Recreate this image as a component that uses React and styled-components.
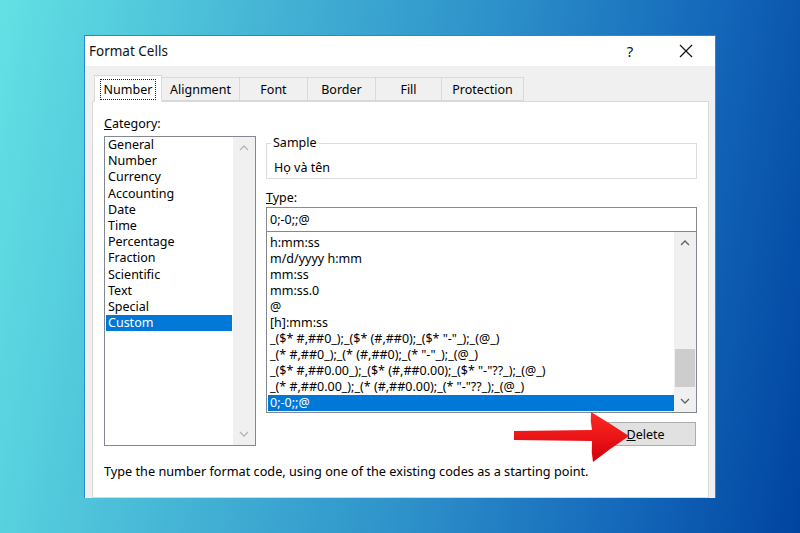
import React from "react";
import styled, { createGlobalStyle } from "styled-components";

const GlobalStyle = createGlobalStyle`
  html, body {
    margin: 0;
    padding: 0;
  }
  body {
    font-family: "Noto Sans", "Open Sans", sans-serif;
    color: #000;
  }
`;

const categories = [
  "General",
  "Number",
  "Currency",
  "Accounting",
  "Date",
  "Time",
  "Percentage",
  "Fraction",
  "Scientific",
  "Text",
  "Special",
  "Custom",
];

const formats = [
  "h:mm:ss",
  "m/d/yyyy h:mm",
  "mm:ss",
  "mm:ss.0",
  "@",
  "[h]:mm:ss",
  '_($* #,##0_);_($* (#,##0);_($* "-"_);_(@_)',
  '_(* #,##0_);_(* (#,##0);_(* "-"_);_(@_)',
  '_($* #,##0.00_);_($* (#,##0.00);_($* "-"??_);_(@_)',
  '_(* #,##0.00_);_(* (#,##0.00);_(* "-"??_);_(@_)',
  "0;-0;;@",
];

const tabs = ["Number", "Alignment", "Font", "Border", "Fill", "Protection"];
const tabWidths = [68, 78, 68, 68, 66, 82];

function Chevron({ down, color }) {
  return (
    <svg width="10" height="6" viewBox="0 0 10 6">
      <path
        d={down ? "M1 1 L5 5 L9 1" : "M1 5 L5 1 L9 5"}
        fill="none"
        stroke={color}
        strokeWidth="1.3"
      />
    </svg>
  );
}

function RedArrow() {
  return (
    <ArrowLayer width="118" height="52" viewBox="0 0 118 52">
      <defs>
        <linearGradient id="arrowRed" x1="0" y1="0" x2="0" y2="1">
          <stop offset="0" stopColor="#ff2a22" />
          <stop offset="1" stopColor="#d4000c" />
        </linearGradient>
      </defs>
      <path
        d="M0 20 L78 19 Q76 10 77 1 Q97 13 115 25 Q97 37 79 51 Q77 41 78 30 L0 29 Z"
        fill="url(#arrowRed)"
      />
    </ArrowLayer>
  );
}

export default function App() {
  return (
    <>
      <GlobalStyle />
      <Screen>
        <Window>
          <TitleBar>
            <Title>Format Cells</Title>
            <TitleButton>?</TitleButton>
            <TitleButton>
              <svg width="14" height="14" viewBox="0 0 14 14">
                <path d="M1 1 L13 13 M13 1 L1 13" stroke="#111" strokeWidth="1.2" />
              </svg>
            </TitleButton>
          </TitleBar>
          <Body>
            <TabStrip>
              {tabs.map((t, i) => (
                <Tab key={t} $active={i === 0} $width={tabWidths[i]}>
                  {i === 0 ? <FocusLabel>{t}</FocusLabel> : t}
                </Tab>
              ))}
            </TabStrip>
            <Panel>
              <Columns>
                <Label>
                  <u>C</u>ategory:
                </Label>
                <span />
                <ListBox $height={310}>
                  <Items $top={0}>
                    {categories.map((c) => (
                      <Item key={c} $selected={c === "Custom"} $right={1} $line={16.2}>
                        {c}
                      </Item>
                    ))}
                  </Items>
                  <ScrollBar>
                    <ScrollBtn>
                      <Chevron color="#b4b4b4" />
                    </ScrollBtn>
                    <ScrollTrack />
                    <ScrollBtn>
                      <Chevron down color="#b4b4b4" />
                    </ScrollBtn>
                  </ScrollBar>
                </ListBox>
                <RightStack>
                  <Group>
                    <Legend>Sample</Legend>
                    <SampleText>Họ và tên</SampleText>
                  </Group>
                  <TypeLabel>
                    <u>T</u>ype:
                  </TypeLabel>
                  <TextField>0;-0;;@</TextField>
                  <ListBox $height={182} $joined>
                    <Items $top={3}>
                      {formats.map((f, i) => (
                        <Item
                          key={i}
                          $selected={i === formats.length - 1}
                          $right={0}
                          $line={16}
                        >
                          {f}
                        </Item>
                      ))}
                    </Items>
                    <ScrollBar>
                      <ScrollBtn>
                        <Chevron color="#606060" />
                      </ScrollBtn>
                      <ScrollTrack>
                        <Thumb />
                      </ScrollTrack>
                      <ScrollBtn>
                        <Chevron down color="#606060" />
                      </ScrollBtn>
                    </ScrollBar>
                  </ListBox>
                  <Button>
                    <u>D</u>elete
                  </Button>
                </RightStack>
              </Columns>
              <Hint>
                Type the number format code, using one of the existing codes as a starting point.
              </Hint>
              <RedArrow />
            </Panel>
          </Body>
        </Window>
      </Screen>
    </>
  );
}

const Screen = styled.div`
  width: 800px;
  height: 533px;
  overflow: hidden;
  box-sizing: border-box;
  padding: 35px 0 0 84px;
  background: linear-gradient(
    100deg,
    #62e1e4 0%,
    #45b4d5 30%,
    #2e92ca 55%,
    #1468ba 80%,
    #0044a0 100%
  );
`;

const Window = styled.div`
  width: 632px;
  height: 463px;
  box-sizing: border-box;
  border: 1px solid #2c86d2;
  border-bottom: none;
  background: #f0f0f0;
  display: flex;
  flex-direction: column;
  overflow: hidden;
`;

const TitleBar = styled.div`
  height: 30px;
  flex-shrink: 0;
  background: #fff;
  display: flex;
  align-items: center;
  padding: 0 1px 0 4px;
`;

const Title = styled.div`
  flex: 1;
  font-size: 13.5px;
  color: #111;
`;

const TitleButton = styled.div`
  width: 56px;
  display: flex;
  justify-content: center;
  align-items: center;
  font-size: 15px;
  color: #111;
`;

const Body = styled.div`
  flex: 1;
  display: flex;
  flex-direction: column;
  padding: 10px 6px 0 7px;
`;

const TabStrip = styled.div`
  display: flex;
  align-items: flex-end;
  height: 26px;
  padding-left: 2px;
  position: relative;
  z-index: 1;
  margin-bottom: -1px;
`;

const Tab = styled.div`
  width: ${(p) => p.$width}px;
  box-sizing: border-box;
  height: ${(p) => (p.$active ? 27 : 24)}px;
  display: flex;
  align-items: center;
  justify-content: center;
  padding-top: 1px;
  font-size: 12.5px;
  border: 1px solid #d9d9d9;
  border-left-width: ${(p) => (p.$active ? 1 : 0)}px;
  border-bottom-color: ${(p) => (p.$active ? "#fff" : "#d9d9d9")};
  background: ${(p) => (p.$active ? "#fff" : "#f0f0f0")};
  margin-bottom: ${(p) => (p.$active ? 0 : 1)}px;
`;

const FocusLabel = styled.span`
  border: 1px dotted #222;
  padding: 1px 3px;
`;

const Panel = styled.div`
  flex: 1;
  position: relative;
  background: #fff;
  border: 1px solid #d9d9d9;
  padding: 15px 11px 0 11px;
`;

const Columns = styled.div`
  display: grid;
  grid-template-columns: 152px 431px;
  column-gap: 10px;
  align-items: start;
`;

const Label = styled.div`
  font-size: 12.5px;
  line-height: 14px;
  height: 19px;
  u {
    text-decoration-thickness: 1px;
  }
`;

const ListBox = styled.div`
  height: ${(p) => p.$height}px;
  box-sizing: border-box;
  border: 1px solid #828790;
  margin-top: ${(p) => (p.$joined ? -1 : 0)}px;
  display: flex;
  background: #fff;
`;

const Items = styled.div`
  flex: 1;
  padding-top: ${(p) => p.$top}px;
  overflow: hidden;
`;

const Item = styled.div`
  font-size: 12.5px;
  line-height: ${(p) => p.$line}px;
  height: ${(p) => p.$line}px;
  white-space: nowrap;
  padding-left: 2px;
  margin-left: 1px;
  margin-right: ${(p) => p.$right}px;
  background: ${(p) => (p.$selected ? "#0078d7" : "transparent")};
  color: ${(p) => (p.$selected ? "#fff" : "#000")};
`;

const ScrollBar = styled.div`
  width: 22px;
  flex-shrink: 0;
  background: #f0f0f0;
  display: flex;
  flex-direction: column;
`;

const ScrollBtn = styled.div`
  height: 22px;
  display: flex;
  align-items: center;
  justify-content: center;
`;

const ScrollTrack = styled.div`
  flex: 1;
  position: relative;
  display: flex;
  flex-direction: column;
  justify-content: flex-end;
  padding: 0 1px 3px;
`;

const Thumb = styled.div`
  height: 38px;
  background: #cdcdcd;
`;

const RightStack = styled.div`
  display: flex;
  flex-direction: column;
`;

const Group = styled.fieldset`
  margin: 0;
  padding: 9px 7px 1px;
  border: 1px solid #dcdcdc;
  min-width: 0;
`;

const Legend = styled.legend`
  font-size: 12.5px;
  line-height: 14px;
  padding: 0 2px;
  margin-left: -3px;
`;

const SampleText = styled.div`
  font-size: 12.5px;
  line-height: 18px;
`;

const TypeLabel = styled(Label)`
  margin-top: 12px;
  height: 16px;
`;

const TextField = styled.div`
  height: 25px;
  box-sizing: border-box;
  border: 1px solid #8a8a8a;
  padding-left: 3px;
  font-size: 12.5px;
  line-height: 23px;
`;

const Button = styled.div`
  align-self: flex-end;
  margin: 9px 1px 0 0;
  width: 101px;
  height: 24px;
  box-sizing: border-box;
  border: 1px solid #adadad;
  background: #e1e1e1;
  display: flex;
  align-items: center;
  justify-content: center;
  font-size: 12.5px;
`;

const Hint = styled.div`
  margin-top: 18px;
  font-size: 12.7px;
  line-height: 14px;
  white-space: nowrap;
`;

const ArrowLayer = styled.svg`
  position: absolute;
  left: 421px;
  top: 309px;
  pointer-events: none;
`;
